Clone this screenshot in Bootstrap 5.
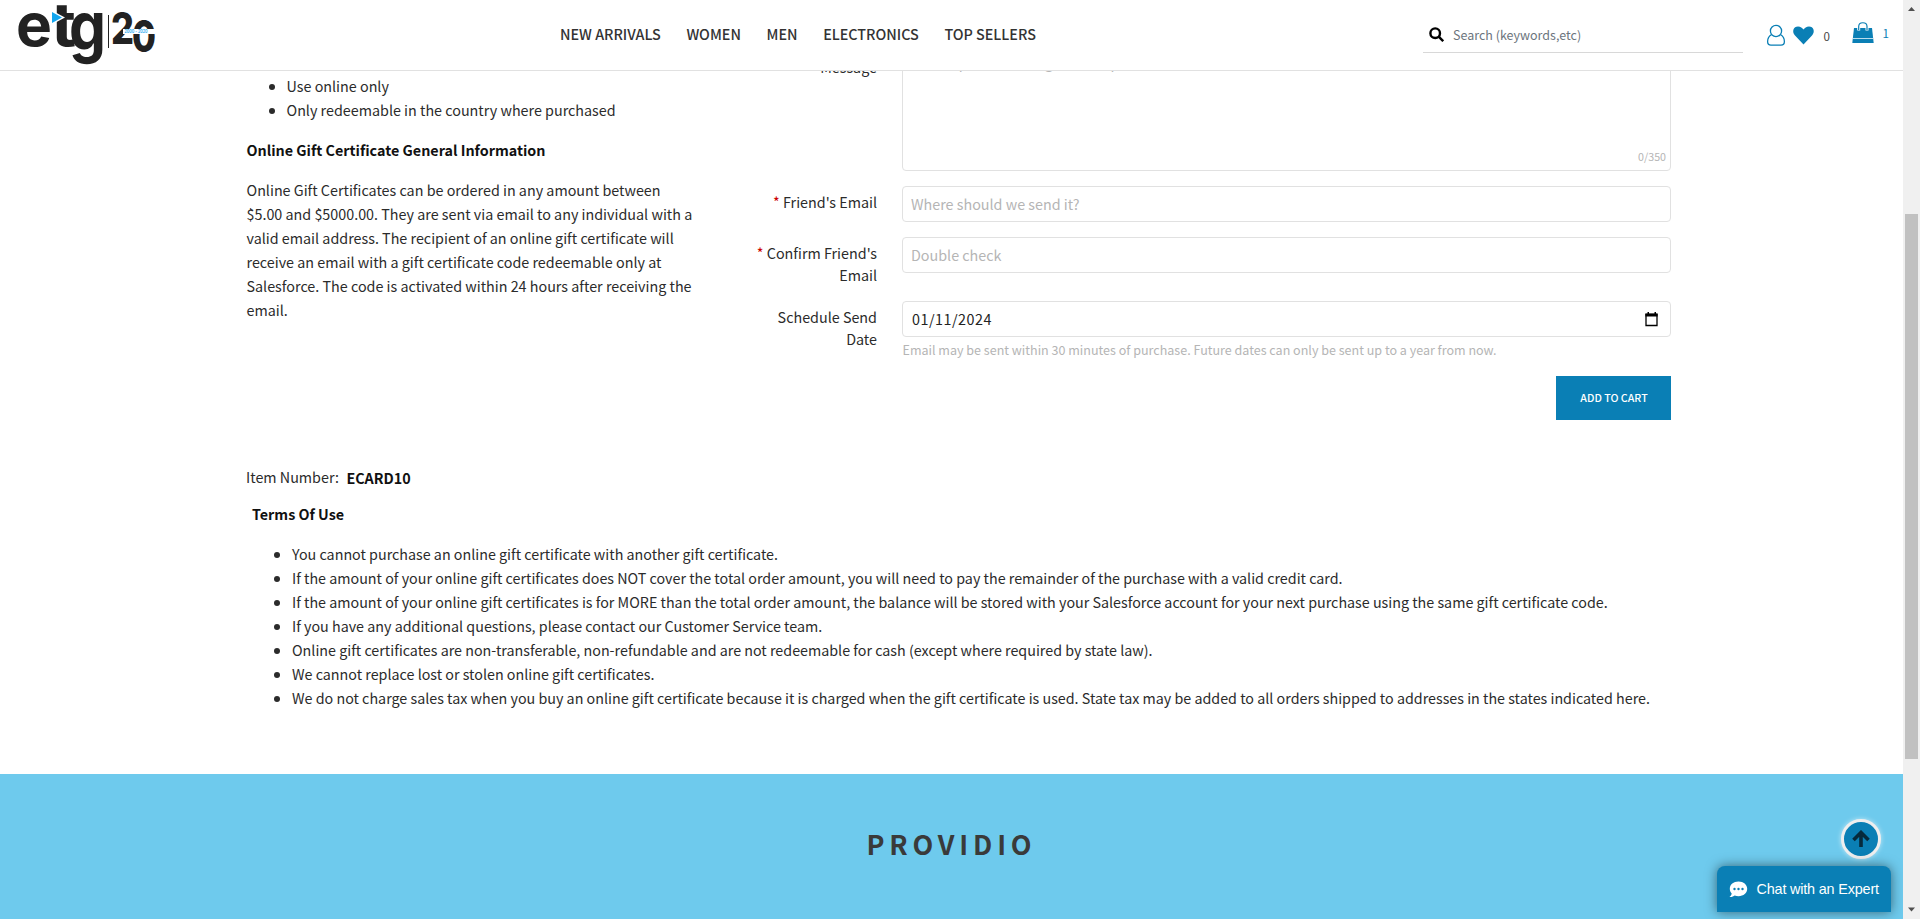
<!DOCTYPE html>
<html lang="en">
<head>
<meta charset="utf-8">
<meta name="viewport" content="width=device-width, initial-scale=1">
<title>Online Gift Certificate</title>
<link href="https://cdn.jsdelivr.net/npm/bootstrap@5.3.0/dist/css/bootstrap.min.css" rel="stylesheet">
<style>
html, body { height: 100%; overflow: hidden; }
body { font-family: "Noto Sans CJK SC", "Noto Sans", sans-serif; font-size: 14.33px; line-height: 24px; color: #2b2b2b; background: #fff; }
.page-view { width: 1903px; height: 919px; overflow: hidden; }
.site-header { height: 71px; border-bottom: 1px solid #e1e1e1; background: #fff; z-index: 5; }
.logo-box { width: 320px; padding-left: 18px; }
.main-nav { margin-left: 240px; gap: 25.6px; padding-bottom: 2px; }
.main-nav a { font-size: 14.33px; font-weight: 500; color: #333; text-decoration: none; white-space: nowrap; }
.search-box { width: 320px; height: 33px; margin-top: 20px; border-bottom: 1px solid #d8d8d8; color: #6c757d; font-size: 12.5px; padding: 0 0 3px 6px; gap: 9px; }
.product-area { padding-left: 246px; padding-right: 232px; height: 390px; }
.info-col { width: 450px; flex: none; padding-top: 3px; padding-left: .5px; }
.form-col { flex: 1; padding-left: 31px; }
.bullets { padding-left: 40px; margin: 0 0 16px; }
.info-col b, .terms-title, .item-code { font-weight: 700; color: #111; }
.item-code { padding-top: 1px; margin-left: 7.5px; }
.field-label { width: 150px; flex: none; text-align: right; line-height: 22px; padding-top: 5px; margin-right: 25px; }
.field-row { margin-top: 15px; }
.message-row { margin-top: -50px; }
.message-row .field-label { padding-top: 35px; }
.form-col .form-control { height: 36px; border: 1px solid #e1e1e1; border-radius: 4px; font-size: 14.33px; line-height: 24px; padding: 5px 8px; color: #222; }
.form-col input.form-control { padding: 4px 8px 6px; }
.form-col .form-control::placeholder { color: #b5b5b5; opacity: 1; }
.form-col .message-box { height: 150px; resize: none; padding-top: 28px; }
.counter { right: 5px; bottom: 4px; font-size: 10.7px; line-height: 20px; color: #b5b5b5; }
.date-text { letter-spacing: .5px; padding-left: 1px; }
.help-line { font-size: 12.54px; line-height: 20px; color: #b5b5b5; margin-top: 3px; padding-left: .5px; }
.req { color: #c00; }
.cart-btn { width: 115px; height: 44px; border-radius: 0; background: #0a7fb5; color: #fff; font-size: 10.65px; font-weight: 500; padding: 0 0 0 1px; }
.terms-area { padding-left: 246px; height: 313px; padding-top: 4px; }
.terms-title { margin: 12px 0 16px; padding-left: 6px; }
.terms-list { padding-left: 46px; font-size: 14.31px; }
.brand-footer { background: #6ecaed; height: 145px; }
.brand-name { font-size: 27px; font-weight: 700; letter-spacing: 4.8px; color: #3a3a3a; padding-top: 58px; line-height: 24px; }
.top-btn { width: 40px; height: 40px; left: 1841px; top: 819px; border: 3px solid #eee; background: #0a7fb5; box-shadow: 0 0 5px rgba(255,255,255,.6); }
.chat-tab { left: 1717px; top: 866px; width: 174px; height: 46px; border-radius: 8px 8px 0 0; background: #0a7fb5; color: #fff; font: 14.4px "Liberation Sans", Arial, sans-serif; letter-spacing: -.17px; box-shadow: 0 0 12px rgba(0,0,0,.5); padding-left: 12px; gap: 8.5px; }
.scroll-track { width: 17px; height: 919px; background: #f0f0f0; }
.scroll-thumb { width: 13px; height: 545px; background: #c1c1c1; }
</style>
</head>
<body class="d-flex">
<div class="page-view position-relative flex-shrink-0">
  <header class="site-header position-relative d-flex">
    <div class="logo-box">
      <svg width="140" height="68" viewBox="18 0 140 68" font-family="Inter, sans-serif" fill="#222">
        <g font-size="60" font-weight="700">
          <text x="16" y="45.500" textLength="36" lengthAdjust="spacingAndGlyphs">e</text>
          <text x="51" y="45.500" textLength="25" lengthAdjust="spacingAndGlyphs">t</text>
          <text x="69" y="49.500" font-size="67" textLength="37" lengthAdjust="spacingAndGlyphs">g</text>
        </g>
        <path d="M51 10L65 17.500L51 25Z" fill="#fff"/><path d="M52 12L62 17.500L52 23Z" fill="#12a5ee"/>
        <path d="M108.500 15V48" stroke="#222"/>
        <g font-size="44" font-weight="800"><text x="111" y="44" textLength="23" lengthAdjust="spacingAndGlyphs">2</text><text x="132" y="52" textLength="24" lengthAdjust="spacingAndGlyphs">0</text></g>
        <path d="M123 29H155V34H123Z" fill="#fff"/>
        <text x="124.500" y="33.300" font-size="4.500" font-weight="600" fill="#12a5ee" textLength="23" lengthAdjust="spacingAndGlyphs">2000 - 2020</text>
      </svg>
    </div>
    <nav class="main-nav d-flex align-items-center"><a href="#">NEW ARRIVALS</a><a href="#">WOMEN</a><a href="#">MEN</a><a href="#">ELECTRONICS</a><a href="#">TOP SELLERS</a></nav>
    <div class="search-box d-flex align-items-center ms-auto">
      <svg width="15" height="15" viewBox="0 0 15 15" fill="none" stroke="#000" stroke-width="2.400"><circle cx="6.200" cy="6.200" r="4.800"/><path d="M9.700 9.700L14.200 14.200"/></svg>
      <span>Search (keywords,etc)</span>
    </div>
    <div class="d-flex">
      <svg width="160" height="70" viewBox="1743 0 160 70" fill="none">
        <g stroke="#0a7fb5" stroke-width="1.300"><path d="M1771.500 34.500C1769 36 1767.600 38 1767.600 41.500C1767.600 44 1769 45.200 1771 45.200H1781C1783 45.200 1784.400 44 1784.400 41.500C1784.400 38 1783 36 1780.500 34.500"/><circle cx="1776" cy="31" r="5.600"/></g>
        <path d="M1803.500 44.500L1795 35.500C1791.500 31.500 1793.500 26.500 1798 26.500C1800.500 26.500 1802.500 28 1803.500 29.500C1804.500 28 1806.500 26.500 1809 26.500C1813.500 26.500 1815.500 31.500 1812 35.500Z" fill="#0a7fb5"/>
        <path d="M1854 28H1872L1873.700 43H1852.300Z" fill="#0a7fb5"/><path d="M1853 38.500H1873" stroke="#b9dcec"/>
        <path d="M1858.700 30.500V26.500C1858.700 21.500 1867 21.500 1867 26.500V30.500" stroke="#fff" stroke-width="3"/><path d="M1858.700 30V26.500C1858.700 21.500 1867 21.500 1867 26.500V30" stroke="#0a7fb5" stroke-width="1.200"/>
        <g font-size="11.600"><text x="1823.500" y="41" fill="#444">0</text><text x="1882.500" y="38" fill="#0a7fb5">1</text></g>
      </svg>
    </div>
  </header>
  <section class="product-area d-flex">
    <div class="info-col">
      <ul class="bullets"><li>Use online only</li><li>Only redeemable in the country where purchased</li></ul>
      <p class="mb-3"><b>Online Gift Certificate General Information</b></p>
      <p>Online Gift Certificates can be ordered in any amount between<br>$5.00 and $5000.00. They are sent via email to any individual with a<br>valid email address. The recipient of an online gift certificate will<br>receive an email with a gift certificate code redeemable only at<br>Salesforce. The code is activated within 24 hours after receiving the<br>email.</p>
    </div>
    <div class="form-col">
      <div class="d-flex message-row"><label class="field-label">Message</label><div class="position-relative flex-fill"><textarea class="form-control message-box" placeholder="Add a special message here (optional)"></textarea><span class="counter position-absolute">0/350</span></div></div>
      <div class="d-flex field-row"><label class="field-label"><span class="req">*</span> Friend's Email</label><input class="form-control" placeholder="Where should we send it?"></div>
      <div class="d-flex field-row"><label class="field-label"><span class="req">*</span> Confirm Friend's<br>Email</label><input class="form-control" placeholder="Double check"></div>
      <div class="d-flex field-row"><label class="field-label">Schedule Send<br>Date</label><div class="flex-fill"><div class="form-control d-flex align-items-center justify-content-between"><span class="date-text">01/11/2024</span><svg class="me-1" width="13" height="15" viewBox="0 0 13 15"><path d="M1 2.500H12V13.500H1Z" fill="none" stroke="#000" stroke-width="1.300"/><path d="M.4 1.500H12.600V4.500H.4ZM2.500 0H4V3H2.500ZM9.500 0H11V3H9.500Z"/></svg></div><div class="help-line">Email may be sent within 30 minutes of purchase. Future dates can only be sent up to a year from now.</div></div></div>
      <div class="d-flex justify-content-end mt-3"><button class="btn cart-btn">ADD TO CART</button></div>
    </div>
  </section>
  <section class="terms-area">
    <div class="d-flex"><span>Item Number:</span><span class="item-code">ECARD10</span></div>
    <div class="terms-title">Terms Of Use</div>
    <ul class="bullets terms-list">
      <li>You cannot purchase an online gift certificate with another gift certificate.</li>
      <li>If the amount of your online gift certificates does NOT cover the total order amount, you will need to pay the remainder of the purchase with a valid credit card.</li>
      <li>If the amount of your online gift certificates is for MORE than the total order amount, the balance will be stored with your Salesforce account for your next purchase using the same gift certificate code.</li>
      <li>If you have any additional questions, please contact our Customer Service team.</li>
      <li>Online gift certificates are non-transferable, non-refundable and are not redeemable for cash (except where required by state law).</li>
      <li>We cannot replace lost or stolen online gift certificates.</li>
      <li>We do not charge sales tax when you buy an online gift certificate because it is charged when the gift certificate is used. State tax may be added to all orders shipped to addresses in the states indicated here.</li>
    </ul>
  </section>
  <footer class="brand-footer text-center"><div class="brand-name">PROVIDIO</div></footer>
  <div class="top-btn position-absolute rounded-circle d-flex align-items-center justify-content-center"><svg width="18" height="18" viewBox="0 0 18 18" fill="none" stroke="#062a3c" stroke-width="3.600"><path d="M9 17V3M1.500 10L9 2.500L16.500 10"/></svg></div>
  <div class="chat-tab position-absolute d-flex align-items-center"><svg width="19" height="17" viewBox="0 0 19 17"><path d="M9.500.5C4.500.5.8 3.600.8 7.700C.8 9.800 1.600 11.300 2.700 12.500C2.500 14 1.600 15 .5 16C2.900 16.200 4.600 15.300 5.700 14.500C6.900 15 8.200 15.200 9.500 15.200C14.500 15.200 18.200 11.900 18.200 7.800S14.500.5 9.500.5Z" fill="#fff"/><g fill="#0a7fb5"><circle cx="5.500" cy="8" r="1.200"/><circle cx="9.500" cy="8" r="1.200"/><circle cx="13.500" cy="8" r="1.200"/></g></svg><span>Chat with an Expert</span></div>
</div>
<div class="scroll-track d-flex flex-column align-items-center justify-content-between">
  <svg width="17" height="214" viewBox="0 0 17 214"><path d="M5 11L8.500 7L12 11Z" fill="#505050"/></svg>
  <div class="scroll-thumb"></div>
  <svg width="17" height="160" viewBox="0 0 17 160"><path d="M5 148.500L8.500 152.500L12 148.500Z" fill="#505050"/></svg>
</div>
<script src="https://cdn.jsdelivr.net/npm/bootstrap@5.3.0/dist/js/bootstrap.bundle.min.js"></script>
</body>
</html>
